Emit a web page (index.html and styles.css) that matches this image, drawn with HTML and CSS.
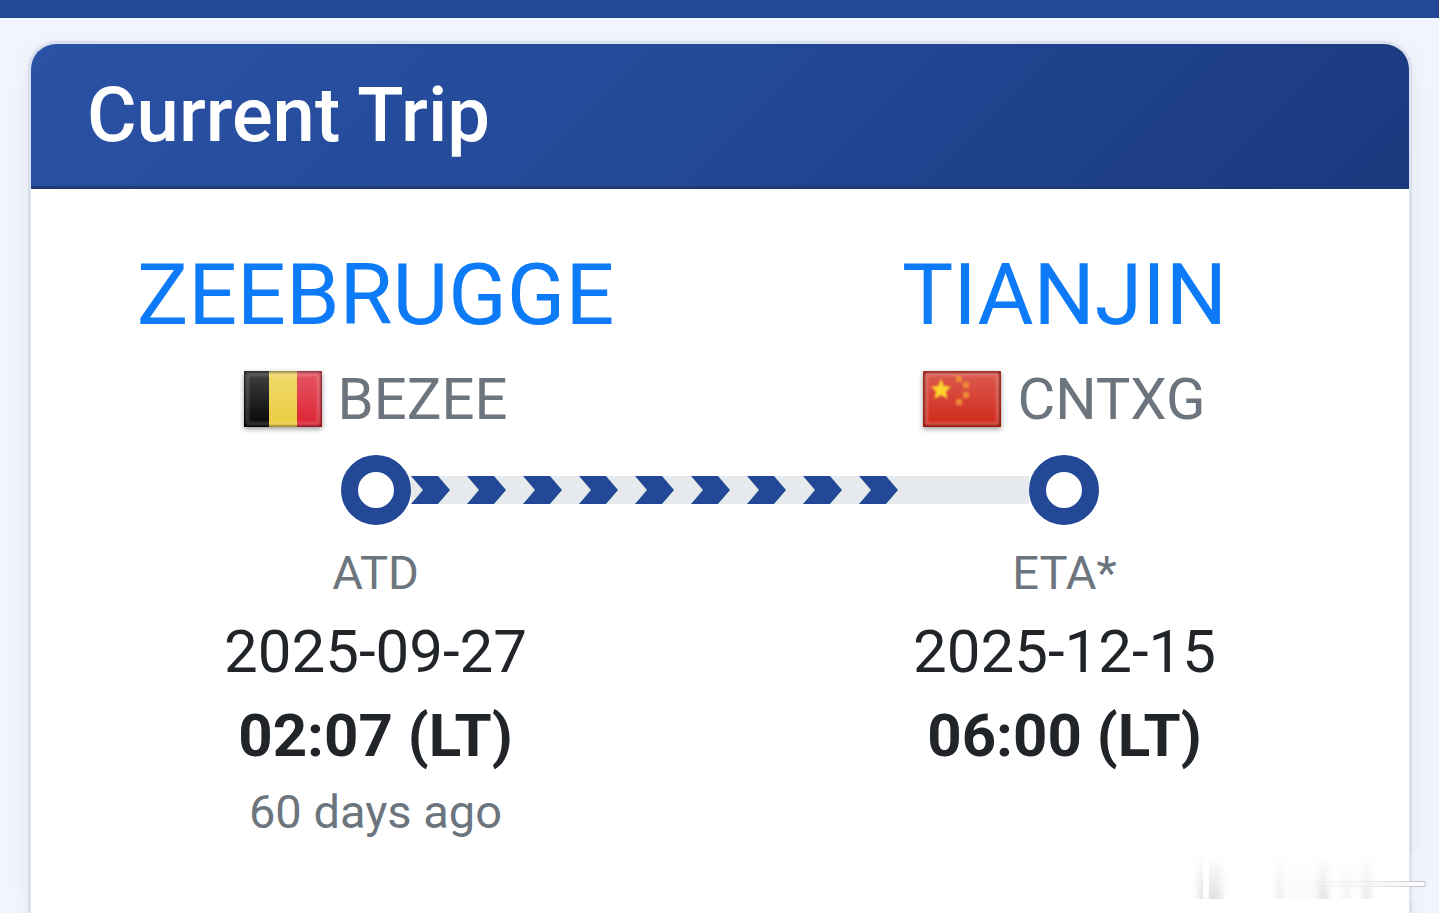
FILE: index.html
```html
<!DOCTYPE html>
<html lang="en">
<head>
    <meta charset="UTF-8">
    <meta name="viewport" content="width=device-width, initial-scale=1.0">
    <title>Current Trip</title>
    <link rel="stylesheet" href="styles.css">
</head>
<body>
    <div class="top-bar"></div>

    <main class="card">
        <h1 class="card-header">Current Trip</h1>

        <div class="card-body">
            <div class="columns">
                <div class="port">
                    <a href="#" class="port-name">ZEEBRUGGE</a>
                    <div class="port-code">
                        <svg class="flag" viewBox="0 0 78 56" aria-hidden="true">
                            <defs>
                                <linearGradient id="gloss" x1="0" y1="0" x2="0" y2="1">
                                    <stop offset="0" stop-color="#fff" stop-opacity=".24"/>
                                    <stop offset=".5" stop-color="#fff" stop-opacity=".12"/>
                                    <stop offset="1" stop-color="#fff" stop-opacity="0"/>
                                </linearGradient>
                                <filter id="blur"><feGaussianBlur stdDeviation="1"/></filter>
                            </defs>
                            <rect width="26" height="56" fill="#050505"/>
                            <rect x="25" width="28" height="56" fill="#ebcd3e"/>
                            <rect x="53" width="25" height="56" fill="#dc2232"/>
                            <rect width="78" height="56" fill="url(#gloss)"/>
                            <g fill="none" stroke-width="2" filter="url(#blur)">
                                <rect x="1" y="1" width="76" height="54" stroke="#000" stroke-opacity=".5"/>
                                <rect x="4" y="4" width="70" height="48" stroke="#fff" stroke-opacity=".2"/>
                            </g>
                        </svg>
                        <span>BEZEE</span>
                    </div>
                </div>
                <div class="port">
                    <a href="#" class="port-name">TIANJIN</a>
                    <div class="port-code">
                        <svg class="flag" viewBox="0 0 78 56" aria-hidden="true">
                            <rect width="78" height="56" fill="#d02819"/>
                            <rect width="78" height="56" fill="url(#gloss)"/>
                            <g filter="url(#blur)">
                                <path d="M18 8l3 7 7 .5-5 5 1.500 7.500-6.500-4-6.500 4 1.500-7.500-5-5 7-.5z" fill="#ffd52f"/>
                                <g fill="#f08a38">
                                    <rect x="33" y="5" width="6" height="6"/>
                                    <rect x="40" y="11" width="6" height="6"/>
                                    <rect x="40" y="21" width="6" height="6"/>
                                    <rect x="33" y="28" width="6" height="6"/>
                                </g>
                            </g>
                            <g fill="none" stroke-width="2" filter="url(#blur)">
                                <rect x="1" y="1" width="76" height="54" stroke="#7a0d05"/>
                                <rect x="4" y="4" width="70" height="48" stroke="#fff" stroke-opacity=".2"/>
                            </g>
                        </svg>
                        <span>CNTXG</span>
                    </div>
                </div>
            </div>

            <div class="route">
                <span class="stop"></span>
                <div class="track">
                    <svg class="progress" style="width: 79%" aria-hidden="true">
                        <defs>
                            <pattern id="arrows" width="56" height="28" patternUnits="userSpaceOnUse">
                                <path d="M0 0h27l12 14-12 14H0l12-14z" fill="#234896"/>
                            </pattern>
                        </defs>
                        <rect width="100%" height="28" fill="url(#arrows)"/>
                    </svg>
                </div>
                <span class="stop"></span>
            </div>

            <div class="columns">
                <div class="schedule">
                    <div class="label">ATD</div>
                    <div class="date">2025-09-27</div>
                    <div class="time">02:07 (LT)</div>
                    <div class="ago">60 days ago</div>
                </div>
                <div class="schedule">
                    <div class="label">ETA*</div>
                    <div class="date">2025-12-15</div>
                    <div class="time">06:00 (LT)</div>
                </div>
            </div>
        </div>
    </main>

    <!-- faint smudge in the corner -->
    <svg class="smudge" viewBox="0 0 249 60" aria-hidden="true">
        <defs>
            <linearGradient id="fade" x1="0" y1="0" x2="0" y2="1">
                <stop offset="0" stop-color="#888" stop-opacity="0"/>
                <stop offset="1" stop-color="#888" stop-opacity=".24"/>
            </linearGradient>
            <linearGradient id="line" gradientUnits="userSpaceOnUse" x1="90" y1="0" x2="236" y2="0">
                <stop offset="0" stop-color="#bbb" stop-opacity="0"/>
                <stop offset=".6" stop-color="#bbb" stop-opacity=".2"/>
                <stop offset="1" stop-color="#bbb" stop-opacity=".9"/>
            </linearGradient>
            <linearGradient id="core" gradientUnits="userSpaceOnUse" x1="90" y1="0" x2="236" y2="0">
                <stop offset="0" stop-color="#fff" stop-opacity="0"/>
                <stop offset="1" stop-color="#fff"/>
            </linearGradient>
            <filter id="soft"><feGaussianBlur stdDeviation="3 0"/></filter>
        </defs>
        <rect x="10" width="220" height="48" fill="#fff" opacity=".2"/>
        <g fill="url(#fade)" filter="url(#soft)">
            <rect x="8" y="2" width="24" height="44"/>
            <rect x="86" y="2" width="7" height="44" opacity=".7"/>
            <rect x="100" y="6" width="24" height="40" opacity=".2"/>
            <rect x="128" y="2" width="10" height="44"/>
            <rect x="153" y="6" width="7" height="40" opacity=".5"/>
            <rect x="172" y="2" width="9" height="44" opacity=".8"/>
        </g>
        <rect x="13" y="4" width="6" height="42" rx="2" fill="#fff"/>
        <rect x="90" y="28" width="146" height="6" rx="3" fill="url(#line)"/>
        <rect x="90" y="29" width="145" height="4" rx="2" fill="url(#core)"/>
    </svg>
</body>
</html>
```
FILE: styles.css
```css
* {
    box-sizing: border-box;
}
body {
    display: flex;
    flex-direction: column;
    height: 100vh;
    margin: 0;
    overflow: hidden;
    background-color: #f2f5fd;
    color: #212529;
    font-family: Roboto, 'Liberation Sans', sans-serif;
}
.top-bar {
    flex: none;
    height: 18px;
    background-color: #234896;
}
.card {
    flex: 1;
    margin: 23px 27px 0 28px;
    border: 3px solid rgba(20, 60, 140, 0.1);
    border-bottom: 0;
    border-radius: 28px 28px 0 0;
    background-color: #fff;
    background-clip: padding-box;
    box-shadow: 0 4px 24px rgba(0, 0, 0, 0.06);
}
.card-header {
    margin: 0;
    padding: 20px 56px;
    border-bottom: 3px solid #203a76;
    border-radius: 25px 25px 0 0;
    background: linear-gradient(135deg, #2a52a5 0%, #234896 50%, #1a387e 100%);
    color: #fff;
    font-size: 76px;
    font-weight: 500;
    line-height: 102px;
}
.card-body {
    padding-top: 50px;
}
.columns {
    display: grid;
    grid-template-columns: 1fr 1fr;
    text-align: center;
}
.port-name {
    display: block;
    color: #0d7bf8;
    font-size: 86px;
    line-height: 112px;
    text-decoration: none;
}
.port-code {
    display: flex;
    align-items: center;
    justify-content: center;
    gap: 16px;
    color: #6c757d;
    font-size: 58px;
    line-height: 96px;
}
.flag {
    width: 78px;
    height: 56px;
    box-shadow: 0 2px 5px rgba(0, 0, 0, 0.4);
}
.route {
    display: flex;
    align-items: center;
    width: 55%;
    margin: 8px auto 10px;
}
.stop {
    flex: none;
    width: 70px;
    height: 70px;
    border: 17px solid #234896;
    border-radius: 50%;
    background-color: #fff;
}
.track {
    flex: 1;
    height: 28px;
    background-color: #e6eaed;
}
.progress {
    display: block;
    height: 28px;
}
.label,
.ago {
    color: #6c757d;
    font-size: 47px;
}
.label {
    line-height: 75px;
}
.date,
.time {
    font-size: 60px;
    line-height: 84px;
}
.time {
    font-weight: 700;
}
.ago {
    line-height: 68px;
}
.smudge {
    position: absolute;
    right: 0;
    bottom: 0;
    width: 249px;
    height: 60px;
}
```
